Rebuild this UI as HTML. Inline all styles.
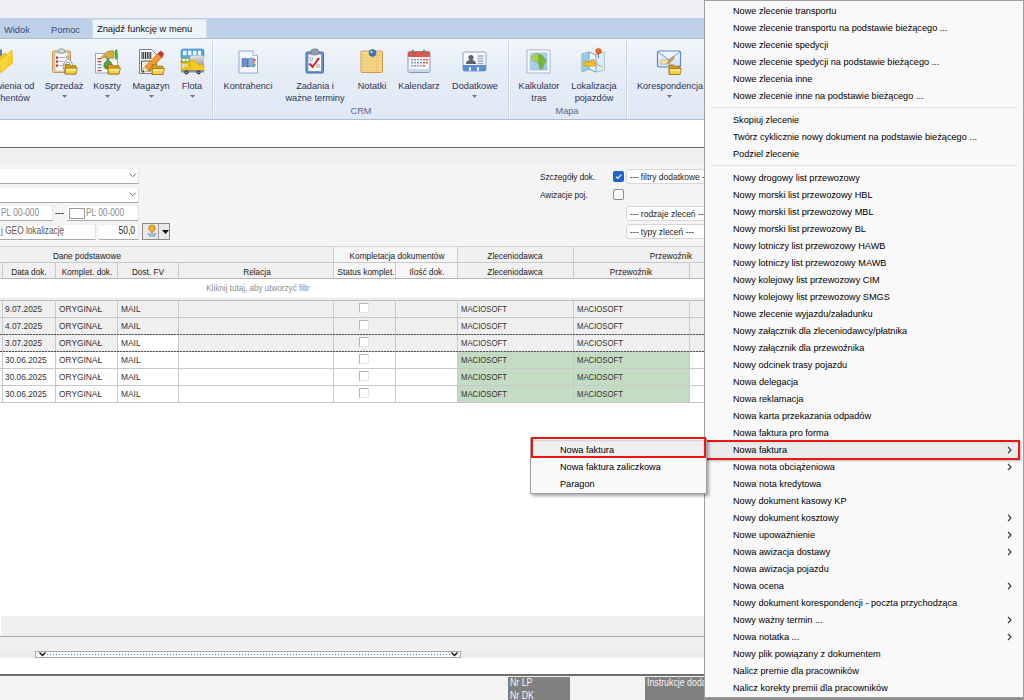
<!DOCTYPE html><html><head><meta charset="utf-8"><style>
html,body{margin:0;padding:0;}
body{width:1024px;height:700px;overflow:hidden;position:relative;background:#f3f3f3;font-family:"Liberation Sans",sans-serif;}
.t{position:absolute;white-space:nowrap;}
.b{position:absolute;box-sizing:border-box;}
svg{position:absolute;}
</style></head><body>
<div class="b" style="left:0px;top:0px;width:1024px;height:18px;background:#eff0f5"></div>
<div class="b" style="left:0px;top:18px;width:1024px;height:21px;background:#bfd1e8"></div>
<div class="b" style="left:92px;top:19px;width:115px;height:19px;background:#edf3fb;border:1px solid #d0dded;border-bottom:none"></div>
<div class="b" style="left:0px;top:38px;width:1024px;height:1px;background:#a9bdd8"></div>
<div class="t" style="left:4px;top:22.0px;font-size:9.6px;line-height:16px;color:#3a4a72;transform:scaleX(0.97);transform-origin:0 50%;">Widok</div>
<div class="t" style="left:51px;top:22.0px;font-size:9.6px;line-height:16px;color:#3a4a72;transform:scaleX(0.97);transform-origin:0 50%;">Pomoc</div>
<div class="t" style="left:97px;top:20.5px;font-size:9.6px;line-height:16px;color:#111;transform:scaleX(0.97);transform-origin:0 50%;">Znajdź funkcję w menu</div>
<div class="b" style="left:0px;top:39px;width:1024px;height:81px;background:linear-gradient(#f3f6fb 0%,#e6edf7 40%,#dfe8f4 100%);border-bottom:1px solid #a8bdd8"></div>
<div class="b" style="left:212px;top:41px;width:1px;height:77px;background:#c6d4e6;box-shadow:1px 0 0 #f6f9fd"></div>
<div class="b" style="left:508px;top:41px;width:1px;height:77px;background:#c6d4e6;box-shadow:1px 0 0 #f6f9fd"></div>
<div class="b" style="left:626px;top:41px;width:1px;height:77px;background:#c6d4e6;box-shadow:1px 0 0 #f6f9fd"></div>
<div class="t" style="left:-135px;width:300px;text-align:center;top:78.0px;font-size:9.6px;line-height:16px;color:#2e3456;transform:scaleX(0.955);transform-origin:50% 50%;">wienia od</div>
<div class="t" style="left:-135px;width:300px;text-align:center;top:89.5px;font-size:9.6px;line-height:16px;color:#2e3456;transform:scaleX(0.955);transform-origin:50% 50%;">hentów</div>
<div class="t" style="left:-86px;width:300px;text-align:center;top:78.0px;font-size:9.6px;line-height:16px;color:#2e3456;transform:scaleX(0.955);transform-origin:50% 50%;">Sprzedaż</div>
<svg style="left:61.5px;top:94.5px" width="5" height="3" viewBox="0 0 5 3"><path d="M0 0H5L2.5 3Z" fill="#707482"/></svg>
<div class="t" style="left:-43px;width:300px;text-align:center;top:78.0px;font-size:9.6px;line-height:16px;color:#2e3456;transform:scaleX(0.955);transform-origin:50% 50%;">Koszty</div>
<svg style="left:104.5px;top:94.5px" width="5" height="3" viewBox="0 0 5 3"><path d="M0 0H5L2.5 3Z" fill="#707482"/></svg>
<div class="t" style="left:1px;width:300px;text-align:center;top:78.0px;font-size:9.6px;line-height:16px;color:#2e3456;transform:scaleX(0.955);transform-origin:50% 50%;">Magazyn</div>
<svg style="left:148.5px;top:94.5px" width="5" height="3" viewBox="0 0 5 3"><path d="M0 0H5L2.5 3Z" fill="#707482"/></svg>
<div class="t" style="left:42px;width:300px;text-align:center;top:78.0px;font-size:9.6px;line-height:16px;color:#2e3456;transform:scaleX(0.955);transform-origin:50% 50%;">Flota</div>
<svg style="left:189.5px;top:94.5px" width="5" height="3" viewBox="0 0 5 3"><path d="M0 0H5L2.5 3Z" fill="#707482"/></svg>
<div class="t" style="left:98px;width:300px;text-align:center;top:78.0px;font-size:9.6px;line-height:16px;color:#2e3456;transform:scaleX(0.955);transform-origin:50% 50%;">Kontrahenci</div>
<div class="t" style="left:165px;width:300px;text-align:center;top:78.0px;font-size:9.6px;line-height:16px;color:#2e3456;transform:scaleX(0.955);transform-origin:50% 50%;">Zadania i</div>
<div class="t" style="left:165px;width:300px;text-align:center;top:89.5px;font-size:9.6px;line-height:16px;color:#2e3456;transform:scaleX(0.955);transform-origin:50% 50%;">ważne terminy</div>
<div class="t" style="left:222px;width:300px;text-align:center;top:78.0px;font-size:9.6px;line-height:16px;color:#2e3456;transform:scaleX(0.955);transform-origin:50% 50%;">Notatki</div>
<div class="t" style="left:269px;width:300px;text-align:center;top:78.0px;font-size:9.6px;line-height:16px;color:#2e3456;transform:scaleX(0.955);transform-origin:50% 50%;">Kalendarz</div>
<div class="t" style="left:324.5px;width:300px;text-align:center;top:78.0px;font-size:9.6px;line-height:16px;color:#2e3456;transform:scaleX(0.955);transform-origin:50% 50%;">Dodatkowe</div>
<svg style="left:472.0px;top:94.5px" width="5" height="3" viewBox="0 0 5 3"><path d="M0 0H5L2.5 3Z" fill="#707482"/></svg>
<div class="t" style="left:389px;width:300px;text-align:center;top:78.0px;font-size:9.6px;line-height:16px;color:#2e3456;transform:scaleX(0.955);transform-origin:50% 50%;">Kalkulator</div>
<div class="t" style="left:389px;width:300px;text-align:center;top:89.5px;font-size:9.6px;line-height:16px;color:#2e3456;transform:scaleX(0.955);transform-origin:50% 50%;">tras</div>
<div class="t" style="left:444px;width:300px;text-align:center;top:78.0px;font-size:9.6px;line-height:16px;color:#2e3456;transform:scaleX(0.955);transform-origin:50% 50%;">Lokalizacja</div>
<div class="t" style="left:444px;width:300px;text-align:center;top:89.5px;font-size:9.6px;line-height:16px;color:#2e3456;transform:scaleX(0.955);transform-origin:50% 50%;">pojazdów</div>
<div class="t" style="left:519.5px;width:300px;text-align:center;top:78.0px;font-size:9.6px;line-height:16px;color:#2e3456;transform:scaleX(0.955);transform-origin:50% 50%;">Korespondencja</div>
<svg style="left:667.0px;top:94.5px" width="5" height="3" viewBox="0 0 5 3"><path d="M0 0H5L2.5 3Z" fill="#707482"/></svg>
<div class="t" style="left:210.5px;width:300px;text-align:center;top:103.0px;font-size:9.6px;line-height:16px;color:#5a6688;transform:scaleX(0.955);transform-origin:50% 50%;">CRM</div>
<div class="t" style="left:417px;width:300px;text-align:center;top:103.0px;font-size:9.6px;line-height:16px;color:#5a6688;transform:scaleX(0.955);transform-origin:50% 50%;">Mapa</div>
<svg style="left:0px;top:45px" width="16" height="30" viewBox="0 0 16 30"><defs><linearGradient id="fg1" x1="0" y1="0" x2="1" y2="1"><stop offset="0" stop-color="#fde56a"/><stop offset="1" stop-color="#f4c400"/></linearGradient></defs><rect x="-1" y="4.5" width="3" height="12" fill="#6b7a92"/><path d="M0 12L3 8.5L5 7.5L7 9.5L12 5L12.5 15L0 19Z" fill="#f0c428"/><path d="M0 16L12 5L12.5 18L1.5 27.5L0 27Z" fill="url(#fg1)" stroke="#d8a800" stroke-width=".5"/></svg>
<svg style="left:51px;top:48px" width="28" height="28" viewBox="0 0 28 28"><rect x="1.5" y="3" width="18" height="21.5" rx="1" fill="#ecc888" stroke="#c99a48" stroke-width="1"/><rect x="4" y="5" width="13" height="18" fill="#f8f8fb" stroke="#a8b4c8" stroke-width=".6"/><rect x="7.5" y="1" width="6" height="4" rx="1.5" fill="#d4d8e0" stroke="#7a808c" stroke-width=".7"/><path d="M8.5 9.5h6M8.5 13.5h3M8.5 17.5h3" stroke="#9aa8c8" stroke-width="1"/><rect x="5" y="8.5" width="2.2" height="2.2" fill="#d02030"/><rect x="5" y="12.5" width="2.2" height="2.2" fill="#d02030"/><rect x="5" y="16.5" width="2.2" height="2.2" fill="#d02030"/><path d="M15.5 8c2 0 3 1 2 3c3 2 5 6 4 10c-1 2.5-8 2.5-9 0c-1-4 1-8 4-10c-1-1.5-1-3-1-3z" fill="#f6f6f6" stroke="#7a7a7a" stroke-width=".8"/><circle cx="17" cy="16" r="2" fill="none" stroke="#909090" stroke-width=".8"/><path d="M14 16.5h4.5l1 1.2h5.5v8.3h-11z" fill="#d8a018" stroke="#8c6010" stroke-width=".7"/><path d="M14.3 20h12.2l-1.6 6h-10.6z" fill="#f6d040" stroke="#9a6c10" stroke-width=".7"/><path d="M15.2 21h10.3l-.4 1.6h-9.9z" fill="#fdf0a0"/></svg>
<svg style="left:94px;top:48px" width="28" height="28" viewBox="0 0 28 28"><rect x="1.5" y="5.5" width="22" height="19.5" fill="#fafafa" stroke="#98a8c0" stroke-width="1"/><path d="M9 9h12M9 12h12M9 15h6M9 18h6" stroke="#c8d0e0" stroke-width=".8"/><rect x="3.5" y="10" width="4" height="1.3" fill="#e03040"/><rect x="3.5" y="13" width="4" height="1.3" fill="#e03040"/><rect x="3.5" y="16" width="4" height="1.3" fill="#8090b0"/><rect x="3.5" y="19" width="4" height="1.3" fill="#8090b0"/><rect x="3.5" y="22" width="4" height="1.3" fill="#e03040"/><path d="M7 9.5L12 4.5c2-1.5 5-2 8-1.5v7c-2 .5-4 0-5-.5l-3 .5l-1-1l2-1l-3 2z" fill="#d8b040" stroke="#a07818" stroke-width=".6"/><rect x="21" y="1.5" width="2.5" height="10" rx="1" fill="#3cb040"/><path d="M12.5 10.5h3l-1 2c3 1 4 4 3.5 7c-1 2-7 2-8 0c-.5-3 .5-6 3.5-7z" fill="#58a048" stroke="#3a7830" stroke-width=".6"/><path d="M14 16.5h4.5l1 1.2h5.5v8.3h-11z" fill="#d8a018" stroke="#8c6010" stroke-width=".7"/><path d="M14.3 20h12.2l-1.6 6h-10.6z" fill="#f6d040" stroke="#9a6c10" stroke-width=".7"/><path d="M15.2 21h10.3l-.4 1.6h-9.9z" fill="#fdf0a0"/></svg>
<svg style="left:138px;top:48px" width="28" height="28" viewBox="0 0 28 28"><path d="M1.5 1.5h12l5 5v19h-17z" fill="#fbfbfb" stroke="#7080a8" stroke-width="1"/><path d="M4 4v7M5.7 4v7M7.5 4v7M9.3 4v7M11 4v7M12.8 4v7" stroke="#222" stroke-width="1"/><rect x="3.5" y="13" width="9" height="10" fill="#e8e8e8" stroke="#333" stroke-width=".8"/><path d="M4 24.5L6.5 19L20 5.5L24 9.5L10.5 23Z" fill="#f29a28" stroke="#a85a10" stroke-width=".6"/><path d="M20 5.5L22 3.5c1-1 3.5 1.5 3.5 2.5L24 9.5z" fill="#d83030" stroke="#a01818" stroke-width=".5"/><path d="M4 24.5l2.5-5.5l4 4z" fill="#f4e0c0"/><path d="M4 24.5l1-2.2l1.6 1.6z" fill="#222"/><path d="M14 17.0h4.5l1 1.2h5.5v8.3h-11z" fill="#d8a018" stroke="#8c6010" stroke-width=".7"/><path d="M14.3 20.5h12.2l-1.6 6h-10.6z" fill="#f6d040" stroke="#9a6c10" stroke-width=".7"/><path d="M15.2 21.5h10.3l-.4 1.6h-9.9z" fill="#fdf0a0"/></svg>
<svg style="left:180px;top:48px" width="26" height="27" viewBox="0 0 26 27"><defs><linearGradient id="gcont" x1="0" y1="0" x2="0" y2="1"><stop offset="0" stop-color="#e4e4e4"/><stop offset="1" stop-color="#a4a4a4"/></linearGradient></defs><path d="M1 10V3a2 2 0 0 1 2-2h19a2 2 0 0 1 2 2v7z" fill="#5aa6e6" stroke="#3a86c8" stroke-width=".6"/><rect x="3" y="2.8" width="3.4" height="4.4" fill="#eef6ff"/><rect x="8" y="2.8" width="3.4" height="4.4" fill="#eef6ff"/><rect x="13" y="2.8" width="3.4" height="4.4" fill="#eef6ff"/><rect x="18" y="2.8" width="3" height="4.4" fill="#eef6ff"/><rect x="1" y="9.5" width="9.5" height="6" fill="#78bc5c"/><rect x="2.5" y="11" width="2.5" height="2" fill="#fff"/><rect x="6" y="11" width="2.5" height="2" fill="#fff"/><path d="M10 17V9.5a2 2 0 0 1 2-2h10a2 2 0 0 1 2 2V17z" fill="url(#gcont)"/><path d="M10 12.5h5l4 4.5h5v5.5h-14z" fill="#f6c81c" stroke="#d09810" stroke-width=".5"/><path d="M1 14.5h9v8h-9z" fill="#f4c018" stroke="#d09810" stroke-width=".5"/><rect x="2.2" y="16" width="2.3" height="3.5" fill="#c8e8fa"/><rect x="5.3" y="16" width="2.3" height="2.5" fill="#c8e8fa"/><rect x="1" y="22" width="23" height="2.5" fill="#8e8e96"/><circle cx="6.5" cy="24.3" r="2.1" fill="#3a3a3a"/><circle cx="6.5" cy="24.3" r=".8" fill="#ccc"/><circle cx="18.5" cy="24.3" r="2.1" fill="#3a3a3a"/><circle cx="18.5" cy="24.3" r=".8" fill="#ccc"/><rect x="0.5" y="13" width="1" height="1.5" fill="#e03030"/></svg>
<svg style="left:238px;top:50px" width="21" height="24" viewBox="0 0 21 24"><path d="M1 1h14l4.5 4.5v17.5h-18.5z" fill="#f4f8fd" stroke="#8aaad0" stroke-width="1"/><path d="M15 1v4.5h4.5" fill="#ffffff" stroke="#8aaad0" stroke-width=".8"/><path d="M4 9c2-1 4-1 6 0v8c-2-1-4-1-6 0z" fill="#6f93c8" stroke="#3c5c90" stroke-width=".6"/><path d="M10 9c2-1 4-1 6 0v8c-2-1-4-1-6 0z" fill="#8fb0dc" stroke="#3c5c90" stroke-width=".6"/><rect x="16" y="9" width="1.5" height="2" fill="#e04040"/><rect x="16" y="11.5" width="1.5" height="2" fill="#f0c030"/><rect x="16" y="14" width="1.5" height="2" fill="#40b060"/></svg>
<svg style="left:305px;top:48px" width="20" height="26" viewBox="0 0 20 26"><rect x="1" y="4" width="17.5" height="21" rx="1.5" fill="#6a98d0" stroke="#3a68a8" stroke-width="1"/><rect x="3.5" y="6.5" width="12.5" height="16.5" fill="#fbfbfb"/><rect x="6" y="1" width="7.5" height="6" rx="2" fill="#9a9ea8" stroke="#6a6e78" stroke-width=".6"/><rect x="5" y="10" width="2.5" height="2.5" fill="none" stroke="#888" stroke-width=".6"/><path d="M11 11h4M11 17h4M11 19h4" stroke="#888" stroke-width=".8"/><path d="M4.5 15.5L7.5 19L14 10" stroke="#d82028" stroke-width="2" fill="none"/></svg>
<svg style="left:360px;top:49px" width="24" height="25" viewBox="0 0 24 25"><rect x="1" y="2" width="21.5" height="21.5" rx="1" fill="#f7d88a" stroke="#d09a50" stroke-width="1"/><path d="M2 6h20M2 9h20M2 12h20M2 15h20M2 18h20M2 21h20" stroke="#e8b860" stroke-width=".6"/><path d="M17 2v21" stroke="#e0a850" stroke-width=".5"/><circle cx="12.5" cy="4" r="3.4" fill="#3a78c0" stroke="#205090" stroke-width=".6"/><circle cx="11.5" cy="3" r="1.2" fill="#a8d0f0"/></svg>
<svg style="left:407px;top:49px" width="24" height="25" viewBox="0 0 24 25"><rect x="1" y="2.5" width="22" height="21" rx="1.5" fill="#f7f7fa" stroke="#8a98b8" stroke-width="1"/><rect x="1" y="2.5" width="22" height="5.5" rx="1.5" fill="#e05548"/><rect x="5" y="0.5" width="2" height="5" rx="1" fill="#777"/><rect x="16" y="0.5" width="2" height="5" rx="1" fill="#777"/><g fill="#8a98c0"><rect x="4" y="10" width="2" height="1.5"/><rect x="7" y="10" width="2" height="1.5"/><rect x="10" y="10" width="2" height="1.5"/><rect x="13" y="10" width="2" height="1.5"/><rect x="4" y="13" width="2" height="1.5"/><rect x="7" y="13" width="2" height="1.5"/><rect x="10" y="13" width="2" height="1.5"/><rect x="13" y="13" width="2" height="1.5"/><rect x="4" y="16" width="2" height="1.5"/><rect x="7" y="16" width="2" height="1.5"/><rect x="10" y="16" width="2" height="1.5"/><rect x="13" y="16" width="2" height="1.5"/></g><g fill="#e05548"><rect x="16" y="10" width="2" height="1.5"/><rect x="19" y="10" width="2" height="1.5"/><rect x="16" y="13" width="2" height="1.5"/><rect x="19" y="13" width="2" height="1.5"/><rect x="16" y="16" width="2" height="1.5"/></g><rect x="1.5" y="20" width="21" height="3" fill="#c8d4e8"/></svg>
<svg style="left:462px;top:51px" width="25" height="22" viewBox="0 0 25 22"><rect x="1" y="1" width="23" height="19" rx="1.5" fill="#fafbfd" stroke="#8aa0c8" stroke-width="1"/><path d="M1 14h23v4.5a1.5 1.5 0 0 1-1.5 1.5h-20a1.5 1.5 0 0 1-1.5-1.5z" fill="#5a90d0"/><circle cx="9" cy="6.5" r="2.6" fill="#5a6470"/><path d="M4 13c0-3 2-4 5-4s5 1 5 4z" fill="#5a6470"/><path d="M15.5 5h6M15.5 7.5h6M15.5 10h6M15.5 12.5h6" stroke="#a0acc8" stroke-width="1.4"/><rect x="7" y="16" width="2" height="4" rx="1" fill="#f0f4fa"/><rect x="15" y="16" width="2" height="4" rx="1" fill="#f0f4fa"/></svg>
<svg style="left:526px;top:49px" width="25" height="25" viewBox="0 0 25 25"><defs><linearGradient id="afr" x1="0" y1="0" x2="1" y2="0"><stop offset="0" stop-color="#b0d868"/><stop offset=".45" stop-color="#a0cc58"/><stop offset=".5" stop-color="#78b030"/><stop offset="1" stop-color="#80b838"/></linearGradient><linearGradient id="sea" x1="0" y1="0" x2="1" y2="1"><stop offset="0" stop-color="#b8dcf2"/><stop offset="1" stop-color="#8ec4e8"/></linearGradient></defs><rect x="1" y="1" width="23" height="23" fill="#fdfdff" stroke="#98a0c8" stroke-width=".8"/><rect x="3.5" y="3.5" width="18" height="18" fill="url(#sea)"/><path d="M9 4.5C11 4 12 5 14 5.5C16 5.5 17 7 18 9C19 10 20.5 10.5 20 12C19 14 18 15 17.5 17C17 19 15.5 20.5 14.5 20.5C13.5 19 13 16 12.5 14C11 13 9.5 12.5 7.5 12.5C5.5 12 5 10 5.5 8.5C6 6.5 7.5 5 9 4.5Z" fill="url(#afr)" stroke="#5a9020" stroke-width=".4"/></svg>
<svg style="left:580px;top:47px" width="27" height="27" viewBox="0 0 27 27"><path d="M2 7L9 5L16 8L24 5V23L16 25L9 22L2 25Z" fill="#eaf4fa" stroke="#6a90a8" stroke-width=".9"/><path d="M2 7L9 5V22L2 25Z" fill="#9ccbe6"/><path d="M16 8L24 5V23L16 25Z" fill="#d8ecf6"/><path d="M9 5V22M16 8V25" stroke="#6a90a8" stroke-width=".8"/><path d="M3 12l6 3l4-3l5 6l5 2" stroke="#e08868" stroke-width=".7" fill="none"/><path d="M4 15h7v-2h2l2 2v4h-11z" fill="#f2c21e" stroke="#a88010" stroke-width=".5"/><circle cx="18.5" cy="4.2" r="2.8" fill="#e86a28" stroke="#b04a10" stroke-width=".5"/><path d="M18.5 7v4" stroke="#777" stroke-width=".9"/></svg>
<svg style="left:656px;top:49px" width="28" height="27" viewBox="0 0 28 27"><defs><linearGradient id="envg" x1="0" y1="0" x2="0" y2="1"><stop offset="0" stop-color="#f4f8fe"/><stop offset="1" stop-color="#cfe0f4"/></linearGradient></defs><rect x="1.5" y="2" width="23" height="16" rx="1.5" fill="url(#envg)" stroke="#5a8ad0" stroke-width="1.2"/><path d="M1.5 2.5L13 11L24.5 2.5" stroke="#6a96d4" stroke-width="1" fill="none"/><rect x="5" y="11" width="8" height="4" fill="#f4e6a8" stroke="#b09040" stroke-width=".5"/><path d="M11 13.5L17 7.5L18.5 9L12.5 15Z" fill="#e8a040" stroke="#706050" stroke-width=".5"/><path d="M13 16.0h4.5l1 1.2h5.5v8.3h-11z" fill="#d8a018" stroke="#8c6010" stroke-width=".7"/><path d="M13.3 19.5h12.2l-1.6 6h-10.6z" fill="#f6d040" stroke="#9a6c10" stroke-width=".7"/><path d="M14.2 20.5h10.3l-.4 1.6h-9.9z" fill="#fdf0a0"/></svg>
<div class="b" style="left:0px;top:120px;width:1024px;height:27px;background:#ffffff"></div>
<div class="b" style="left:0px;top:147px;width:1024px;height:1px;background:#6b6b6b"></div>
<div class="b" style="left:0px;top:148px;width:1024px;height:17px;background:#efefef"></div>
<div class="b" style="left:0px;top:165px;width:1024px;height:81px;background:#f4f4f4"></div>
<div class="b" style="left:-2px;top:168px;width:141px;height:16px;background:#fff;border-bottom:1px solid #a9a9a9;border-right:1px solid #e3e3e3;border-top:1px solid #f0f0f0"></div>
<svg style="left:129px;top:173px" width="8" height="5" viewBox="0 0 8 5"><path d="M0.5 0.5L3.75 3.75L7 0.5" stroke="#777" fill="none" stroke-width="1"/></svg>
<div class="b" style="left:-2px;top:187px;width:141px;height:16px;background:#fff;border-bottom:1px solid #a9a9a9;border-right:1px solid #e3e3e3;border-top:1px solid #f0f0f0"></div>
<svg style="left:129px;top:192px" width="8" height="5" viewBox="0 0 8 5"><path d="M0.5 0.5L3.75 3.75L7 0.5" stroke="#777" fill="none" stroke-width="1"/></svg>
<div class="b" style="left:-2px;top:205px;width:55px;height:16px;background:#fff;border-bottom:1px solid #a9a9a9;border-right:1px solid #e3e3e3;border-top:1px solid #f0f0f0"></div>
<div class="t" style="left:1px;top:204.5px;font-size:10px;line-height:16px;color:#8a8a8a;transform:scaleX(0.83);transform-origin:0 50%;">PL 00-000</div>
<div class="t" style="left:55px;top:205.0px;font-size:10px;line-height:16px;color:#222;transform:scaleX(0.9);transform-origin:0 50%;">---</div>
<div class="b" style="left:67px;top:205px;width:72px;height:16px;background:#fff;border-bottom:1px solid #a9a9a9;border-right:1px solid #e3e3e3;border-top:1px solid #f0f0f0"></div>
<div class="b" style="left:69px;top:208px;width:16px;height:11px;background:#fff;border:1px solid #9a9a9a"></div>
<div class="t" style="left:86px;top:204.5px;font-size:10px;line-height:16px;color:#8a8a8a;transform:scaleX(0.83);transform-origin:0 50%;">PL 00-000</div>
<div class="b" style="left:-2px;top:224px;width:98px;height:16px;background:#fff;border-bottom:1px solid #a9a9a9;border-right:1px solid #e3e3e3;border-top:1px solid #f0f0f0"></div>
<div class="t" style="left:1px;top:223.0px;font-size:10px;line-height:16px;color:#555;transform:scaleX(0.83);transform-origin:0 50%;">j GEO lokalizację</div>
<div class="b" style="left:99px;top:224px;width:40px;height:16px;background:#fff;border-bottom:1px solid #a9a9a9;border-right:1px solid #e3e3e3;border-top:1px solid #f0f0f0"></div>
<div class="t" style="left:-165px;width:300px;text-align:right;top:223.0px;font-size:10px;line-height:16px;color:#222;transform:scaleX(0.85);transform-origin:100% 50%;">50,0</div>
<div class="b" style="left:142px;top:223px;width:28px;height:17px;background:#e9e9e9;border:1px solid #8a8a8a"></div>
<div class="b" style="left:158px;top:224px;width:1px;height:15px;background:#a0a0a0"></div>
<svg style="left:147px;top:224px" width="10" height="14" viewBox="0 0 10 14"><path d="M5 1a3.2 3.2 0 0 1 3.2 3.2C8.2 6.5 5 9 5 9S1.8 6.5 1.8 4.2A3.2 3.2 0 0 1 5 1z" fill="#f0b030" stroke="#b07810" stroke-width=".8"/><path d="M1 9L3 13L5 11L7 13L9 9" fill="#a8c0e0" stroke="#6080b0" stroke-width=".6"/></svg>
<svg style="left:161.5px;top:230px" width="7" height="4" viewBox="0 0 7 4"><path d="M0 0H7L3.5 4Z" fill="#111"/></svg>
<div class="t" style="left:539.5px;top:168.5px;font-size:9.6px;line-height:16px;color:#222;transform:scaleX(0.855);transform-origin:0 50%;">Szczegóły dok.</div>
<div class="b" style="left:613px;top:171px;width:11px;height:11px;background:#1e63cc;border-radius:2px"></div>
<svg style="left:614px;top:172px" width="9" height="9" viewBox="0 0 9 9"><path d="M2 4.6L3.8 6.4L7.2 2.6" stroke="#fff" stroke-width="1.1" fill="none"/></svg>
<div class="b" style="left:626px;top:169px;width:90px;height:15px;background:#fff;border:1px solid #d6d6d6;border-radius:3px"></div>
<div class="t" style="left:630px;top:168.5px;font-size:9.6px;line-height:16px;color:#1a1a1a;transform:scaleX(0.885);transform-origin:0 50%;">--- filtry dodatkowe ---</div>
<div class="t" style="left:539.5px;top:187.0px;font-size:9.6px;line-height:16px;color:#222;transform:scaleX(0.855);transform-origin:0 50%;">Awizacje poj.</div>
<div class="b" style="left:613px;top:189px;width:11px;height:11px;background:#fbfbfb;border:1px solid #8a8a8a;border-radius:2px"></div>
<div class="b" style="left:626px;top:206px;width:90px;height:15px;background:#fff;border:1px solid #d6d6d6;border-radius:3px"></div>
<div class="t" style="left:630px;top:205.5px;font-size:9.6px;line-height:16px;color:#1a1a1a;transform:scaleX(0.885);transform-origin:0 50%;">--- rodzaje zleceń ---</div>
<div class="b" style="left:626px;top:224px;width:90px;height:15px;background:#fff;border:1px solid #d6d6d6;border-radius:3px"></div>
<div class="t" style="left:630px;top:223.5px;font-size:9.6px;line-height:16px;color:#1a1a1a;transform:scaleX(0.885);transform-origin:0 50%;">--- typy zleceń ---</div>
<div class="b" style="left:0px;top:246px;width:1024px;height:33px;background:#f0f0f0;border-top:1px solid #d6d6d6"></div>
<div class="b" style="left:333px;top:247px;width:124px;height:32px;background:#f6f6f6"></div>
<div class="b" style="left:0px;top:262px;width:1024px;height:1px;background:#c9c9c9"></div>
<div class="b" style="left:0px;top:278px;width:1024px;height:1px;background:#b5b5b5"></div>
<div class="b" style="left:333px;top:247px;width:1px;height:31px;background:#c9c9c9"></div>
<div class="b" style="left:457px;top:247px;width:1px;height:31px;background:#c9c9c9"></div>
<div class="b" style="left:573px;top:247px;width:1px;height:31px;background:#c9c9c9"></div>
<div class="b" style="left:2px;top:263px;width:1px;height:15px;background:#c9c9c9"></div>
<div class="b" style="left:55px;top:263px;width:1px;height:15px;background:#c9c9c9"></div>
<div class="b" style="left:117px;top:263px;width:1px;height:15px;background:#c9c9c9"></div>
<div class="b" style="left:178px;top:263px;width:1px;height:15px;background:#c9c9c9"></div>
<div class="b" style="left:395px;top:263px;width:1px;height:15px;background:#c9c9c9"></div>
<div class="b" style="left:689px;top:263px;width:1px;height:15px;background:#c9c9c9"></div>
<div class="t" style="left:-63px;width:300px;text-align:center;top:248.0px;font-size:9px;line-height:16px;color:#222;transform:scaleX(0.92);transform-origin:50% 50%;">Dane podstawowe</div>
<div class="t" style="left:246.5px;width:300px;text-align:center;top:248.0px;font-size:9px;line-height:16px;color:#222;transform:scaleX(0.92);transform-origin:50% 50%;">Kompletacja dokumentów</div>
<div class="t" style="left:365px;width:300px;text-align:center;top:248.0px;font-size:9px;line-height:16px;color:#222;transform:scaleX(0.92);transform-origin:50% 50%;">Zleceniodawca</div>
<div class="t" style="left:521px;width:300px;text-align:center;top:248.0px;font-size:9px;line-height:16px;color:#222;transform:scaleX(0.92);transform-origin:50% 50%;">Przewoźnik</div>
<div class="t" style="left:-121px;width:300px;text-align:center;top:264.0px;font-size:9px;line-height:16px;color:#222;transform:scaleX(0.92);transform-origin:50% 50%;">Data dok.</div>
<div class="t" style="left:-63px;width:300px;text-align:center;top:264.0px;font-size:9px;line-height:16px;color:#222;transform:scaleX(0.92);transform-origin:50% 50%;">Komplet. dok.</div>
<div class="t" style="left:-2px;width:300px;text-align:center;top:264.0px;font-size:9px;line-height:16px;color:#222;transform:scaleX(0.92);transform-origin:50% 50%;">Dost. FV</div>
<div class="t" style="left:107px;width:300px;text-align:center;top:264.0px;font-size:9px;line-height:16px;color:#222;transform:scaleX(0.92);transform-origin:50% 50%;">Relacja</div>
<div class="t" style="left:216px;width:300px;text-align:center;top:264.0px;font-size:9px;line-height:16px;color:#222;transform:scaleX(0.92);transform-origin:50% 50%;">Status komplet.</div>
<div class="t" style="left:277px;width:300px;text-align:center;top:264.0px;font-size:9px;line-height:16px;color:#222;transform:scaleX(0.92);transform-origin:50% 50%;">Ilość dok.</div>
<div class="t" style="left:365px;width:300px;text-align:center;top:264.0px;font-size:9px;line-height:16px;color:#222;transform:scaleX(0.92);transform-origin:50% 50%;">Zleceniodawca</div>
<div class="t" style="left:481px;width:300px;text-align:center;top:264.0px;font-size:9px;line-height:16px;color:#222;transform:scaleX(0.92);transform-origin:50% 50%;">Przewoźnik</div>
<div class="b" style="left:0px;top:279px;width:1024px;height:18px;background:#fff"></div>
<div class="b" style="left:0px;top:297px;width:1024px;height:3px;background:linear-gradient(#fafafa,#e6e6e6)"></div>
<div class="t" style="left:108px;width:300px;text-align:center;top:279.5px;font-size:9px;line-height:16px;color:#8c8c8c;transform:scaleX(0.9);transform-origin:50% 50%;">Kliknij tutaj, aby utworzyć filtr</div>
<div class="b" style="left:0px;top:300px;width:1024px;height:1px;background:#bdbdbd"></div>
<div class="b" style="left:0px;top:301px;width:1024px;height:16px;background:#efefef"></div>
<div class="b" style="left:0px;top:317px;width:1024px;height:1px;background:#c8c8c8"></div>
<div class="t" style="left:5px;top:300.8px;font-size:9px;line-height:16px;color:#333;transform:scaleX(0.925);transform-origin:0 50%;">9.07.2025</div>
<div class="t" style="left:58.5px;top:300.8px;font-size:9px;line-height:16px;color:#333;transform:scaleX(0.93);transform-origin:0 50%;">ORYGINAŁ</div>
<div class="t" style="left:120.5px;top:300.8px;font-size:9px;line-height:16px;color:#333;transform:scaleX(0.93);transform-origin:0 50%;">MAIL</div>
<div class="t" style="left:461px;top:300.8px;font-size:9px;line-height:16px;color:#333;transform:scaleX(0.86);transform-origin:0 50%;">MACIOSOFT</div>
<div class="t" style="left:577px;top:300.8px;font-size:9px;line-height:16px;color:#333;transform:scaleX(0.86);transform-origin:0 50%;">MACIOSOFT</div>
<div class="b" style="left:359px;top:303px;width:10px;height:10px;background:#fff;border:1px solid #e6e6e6;border-top-color:#b4b4b4;border-left-color:#b4b4b4"></div>
<div class="b" style="left:0px;top:318px;width:1024px;height:16px;background:#efefef"></div>
<div class="b" style="left:0px;top:334px;width:1024px;height:1px;background:#c8c8c8"></div>
<div class="t" style="left:5px;top:317.8px;font-size:9px;line-height:16px;color:#333;transform:scaleX(0.925);transform-origin:0 50%;">4.07.2025</div>
<div class="t" style="left:58.5px;top:317.8px;font-size:9px;line-height:16px;color:#333;transform:scaleX(0.93);transform-origin:0 50%;">ORYGINAŁ</div>
<div class="t" style="left:120.5px;top:317.8px;font-size:9px;line-height:16px;color:#333;transform:scaleX(0.93);transform-origin:0 50%;">MAIL</div>
<div class="t" style="left:461px;top:317.8px;font-size:9px;line-height:16px;color:#333;transform:scaleX(0.86);transform-origin:0 50%;">MACIOSOFT</div>
<div class="t" style="left:577px;top:317.8px;font-size:9px;line-height:16px;color:#333;transform:scaleX(0.86);transform-origin:0 50%;">MACIOSOFT</div>
<div class="b" style="left:359px;top:320px;width:10px;height:10px;background:#fff;border:1px solid #e6e6e6;border-top-color:#b4b4b4;border-left-color:#b4b4b4"></div>
<div class="b" style="left:0px;top:335px;width:1024px;height:16px;background:#efefef"></div>
<div class="b" style="left:0px;top:351px;width:1024px;height:1px;background:#c8c8c8"></div>
<div class="b" style="left:118px;top:335px;width:60px;height:16px;background:#fff"></div>
<div class="t" style="left:5px;top:334.8px;font-size:9px;line-height:16px;color:#333;transform:scaleX(0.925);transform-origin:0 50%;">3.07.2025</div>
<div class="t" style="left:58.5px;top:334.8px;font-size:9px;line-height:16px;color:#333;transform:scaleX(0.93);transform-origin:0 50%;">ORYGINAŁ</div>
<div class="t" style="left:120.5px;top:334.8px;font-size:9px;line-height:16px;color:#333;transform:scaleX(0.93);transform-origin:0 50%;">MAIL</div>
<div class="t" style="left:461px;top:334.8px;font-size:9px;line-height:16px;color:#333;transform:scaleX(0.86);transform-origin:0 50%;">MACIOSOFT</div>
<div class="t" style="left:577px;top:334.8px;font-size:9px;line-height:16px;color:#333;transform:scaleX(0.86);transform-origin:0 50%;">MACIOSOFT</div>
<div class="b" style="left:359px;top:337px;width:10px;height:10px;background:#fff;border:1px solid #e6e6e6;border-top-color:#b4b4b4;border-left-color:#b4b4b4"></div>
<div class="b" style="left:0px;top:352px;width:1024px;height:16px;background:#ffffff"></div>
<div class="b" style="left:458px;top:352px;width:231px;height:16px;background:#c3dcc3"></div>
<div class="b" style="left:0px;top:368px;width:1024px;height:1px;background:#c8c8c8"></div>
<div class="t" style="left:5px;top:351.8px;font-size:9px;line-height:16px;color:#333;transform:scaleX(0.925);transform-origin:0 50%;">30.06.2025</div>
<div class="t" style="left:58.5px;top:351.8px;font-size:9px;line-height:16px;color:#333;transform:scaleX(0.93);transform-origin:0 50%;">ORYGINAŁ</div>
<div class="t" style="left:120.5px;top:351.8px;font-size:9px;line-height:16px;color:#333;transform:scaleX(0.93);transform-origin:0 50%;">MAIL</div>
<div class="t" style="left:461px;top:351.8px;font-size:9px;line-height:16px;color:#333;transform:scaleX(0.86);transform-origin:0 50%;">MACIOSOFT</div>
<div class="t" style="left:577px;top:351.8px;font-size:9px;line-height:16px;color:#333;transform:scaleX(0.86);transform-origin:0 50%;">MACIOSOFT</div>
<div class="b" style="left:359px;top:354px;width:10px;height:10px;background:#fff;border:1px solid #e6e6e6;border-top-color:#b4b4b4;border-left-color:#b4b4b4"></div>
<div class="b" style="left:0px;top:369px;width:1024px;height:16px;background:#ffffff"></div>
<div class="b" style="left:458px;top:369px;width:231px;height:16px;background:#c3dcc3"></div>
<div class="b" style="left:0px;top:385px;width:1024px;height:1px;background:#c8c8c8"></div>
<div class="t" style="left:5px;top:368.8px;font-size:9px;line-height:16px;color:#333;transform:scaleX(0.925);transform-origin:0 50%;">30.06.2025</div>
<div class="t" style="left:58.5px;top:368.8px;font-size:9px;line-height:16px;color:#333;transform:scaleX(0.93);transform-origin:0 50%;">ORYGINAŁ</div>
<div class="t" style="left:120.5px;top:368.8px;font-size:9px;line-height:16px;color:#333;transform:scaleX(0.93);transform-origin:0 50%;">MAIL</div>
<div class="t" style="left:461px;top:368.8px;font-size:9px;line-height:16px;color:#333;transform:scaleX(0.86);transform-origin:0 50%;">MACIOSOFT</div>
<div class="t" style="left:577px;top:368.8px;font-size:9px;line-height:16px;color:#333;transform:scaleX(0.86);transform-origin:0 50%;">MACIOSOFT</div>
<div class="b" style="left:359px;top:371px;width:10px;height:10px;background:#fff;border:1px solid #e6e6e6;border-top-color:#b4b4b4;border-left-color:#b4b4b4"></div>
<div class="b" style="left:0px;top:386px;width:1024px;height:16px;background:#ffffff"></div>
<div class="b" style="left:458px;top:386px;width:231px;height:16px;background:#c3dcc3"></div>
<div class="b" style="left:0px;top:402px;width:1024px;height:1px;background:#c8c8c8"></div>
<div class="t" style="left:5px;top:385.8px;font-size:9px;line-height:16px;color:#333;transform:scaleX(0.925);transform-origin:0 50%;">30.06.2025</div>
<div class="t" style="left:58.5px;top:385.8px;font-size:9px;line-height:16px;color:#333;transform:scaleX(0.93);transform-origin:0 50%;">ORYGINAŁ</div>
<div class="t" style="left:120.5px;top:385.8px;font-size:9px;line-height:16px;color:#333;transform:scaleX(0.93);transform-origin:0 50%;">MAIL</div>
<div class="t" style="left:461px;top:385.8px;font-size:9px;line-height:16px;color:#333;transform:scaleX(0.86);transform-origin:0 50%;">MACIOSOFT</div>
<div class="t" style="left:577px;top:385.8px;font-size:9px;line-height:16px;color:#333;transform:scaleX(0.86);transform-origin:0 50%;">MACIOSOFT</div>
<div class="b" style="left:359px;top:388px;width:10px;height:10px;background:#fff;border:1px solid #e6e6e6;border-top-color:#b4b4b4;border-left-color:#b4b4b4"></div>
<div class="b" style="left:2px;top:300px;width:1px;height:102px;background:#c9c9c9"></div>
<div class="b" style="left:55px;top:300px;width:1px;height:102px;background:#c9c9c9"></div>
<div class="b" style="left:117px;top:300px;width:1px;height:102px;background:#c9c9c9"></div>
<div class="b" style="left:178px;top:300px;width:1px;height:102px;background:#c9c9c9"></div>
<div class="b" style="left:333px;top:300px;width:1px;height:102px;background:#c9c9c9"></div>
<div class="b" style="left:395px;top:300px;width:1px;height:102px;background:#c9c9c9"></div>
<div class="b" style="left:457px;top:300px;width:1px;height:102px;background:#c9c9c9"></div>
<div class="b" style="left:573px;top:300px;width:1px;height:102px;background:#c9c9c9"></div>
<div class="b" style="left:689px;top:300px;width:1px;height:102px;background:#c9c9c9"></div>
<div class="b" style="left:0px;top:334px;width:704px;height:1px;background:repeating-linear-gradient(90deg,#555 0 2px,#bbb 2px 3px)"></div>
<div class="b" style="left:0px;top:351px;width:704px;height:1px;background:repeating-linear-gradient(90deg,#555 0 2px,#bbb 2px 3px)"></div>
<div class="b" style="left:0px;top:403px;width:1024px;height:213px;background:#fff"></div>
<div class="b" style="left:0px;top:616px;width:1024px;height:20px;background:#efefef"></div>
<div class="b" style="left:0px;top:616px;width:1px;height:20px;background:#fff"></div>
<div class="b" style="left:0px;top:636px;width:1024px;height:1px;background:#a8a8a8"></div>
<div class="b" style="left:0px;top:637px;width:1024px;height:14px;background:#f0f0f0"></div>
<div class="b" style="left:0px;top:651px;width:1024px;height:7px;background:#ececec"></div>
<div class="b" style="left:35px;top:651px;width:426px;height:7px;background:#fafafa;border:1px solid #a9a9a9"></div>
<div class="b" style="left:47px;top:654px;width:403px;height:1px;background:repeating-linear-gradient(90deg,#3b8ee0 0 1px,transparent 1px 3px)"></div>
<svg style="left:39px;top:652px" width="7" height="5" viewBox="0 0 7 5"><path d="M0.5 0.5L3.5 3.5L6.5 0.5" stroke="#111" stroke-width="1.4" fill="none"/></svg>
<svg style="left:451px;top:652px" width="7" height="5" viewBox="0 0 7 5"><path d="M0.5 0.5L3.5 3.5L6.5 0.5" stroke="#111" stroke-width="1.4" fill="none"/></svg>
<div class="b" style="left:0px;top:658px;width:1024px;height:16px;background:#fff"></div>
<div class="b" style="left:0px;top:674px;width:1024px;height:2px;background:#6e6e6e"></div>
<div class="b" style="left:0px;top:676px;width:1024px;height:24px;background:#f3f3f3"></div>
<div class="b" style="left:508px;top:677px;width:62px;height:23px;background:#808080"></div>
<div class="t" style="left:510px;top:677.0px;font-size:10px;line-height:12px;color:#f4f4f4;transform:scaleX(0.88);transform-origin:0 50%;">Nr LP</div>
<div class="t" style="left:510px;top:690.0px;font-size:10px;line-height:12px;color:#f4f4f4;transform:scaleX(0.88);transform-origin:0 50%;">Nr DK</div>
<div class="b" style="left:645px;top:677px;width:60px;height:23px;background:#808080"></div>
<div class="t" style="left:647px;top:676.5px;font-size:10px;line-height:12px;color:#f4f4f4;transform:scaleX(0.88);transform-origin:0 50%;">Instrukcje dodatkowe</div>
<div class="b" style="left:704px;top:698px;width:320px;height:2px;background:#8e8e8e"></div>
<div class="b" style="left:704px;top:0px;width:320px;height:698px;background:#f9f9f9;border:1px solid #a0a0a0"></div>
<div class="t" style="left:733px;top:2.0px;font-size:9.6px;line-height:17px;color:#000;transform:scaleX(0.955);transform-origin:0 50%;">Nowe zlecenie transportu</div>
<div class="t" style="left:733px;top:19.0px;font-size:9.6px;line-height:17px;color:#000;transform:scaleX(0.955);transform-origin:0 50%;">Nowe zlecenie transportu na podstawie bieżącego ...</div>
<div class="t" style="left:733px;top:36.0px;font-size:9.6px;line-height:17px;color:#000;transform:scaleX(0.955);transform-origin:0 50%;">Nowe zlecenie spedycji</div>
<div class="t" style="left:733px;top:53.0px;font-size:9.6px;line-height:17px;color:#000;transform:scaleX(0.955);transform-origin:0 50%;">Nowe zlecenie spedycji na podstawie bieżącego ...</div>
<div class="t" style="left:733px;top:70.0px;font-size:9.6px;line-height:17px;color:#000;transform:scaleX(0.955);transform-origin:0 50%;">Nowe zlecenia inne</div>
<div class="t" style="left:733px;top:87.0px;font-size:9.6px;line-height:17px;color:#000;transform:scaleX(0.955);transform-origin:0 50%;">Nowe zlecenie inne na podstawie bieżącego ...</div>
<div class="b" style="left:711px;top:107px;width:306px;height:1px;background:#e3e3e3"></div>
<div class="t" style="left:733px;top:111.0px;font-size:9.6px;line-height:17px;color:#000;transform:scaleX(0.955);transform-origin:0 50%;">Skopiuj zlecenie</div>
<div class="t" style="left:733px;top:128.0px;font-size:9.6px;line-height:17px;color:#000;transform:scaleX(0.955);transform-origin:0 50%;">Twórz cyklicznie nowy dokument na podstawie bieżącego ...</div>
<div class="t" style="left:733px;top:145.0px;font-size:9.6px;line-height:17px;color:#000;transform:scaleX(0.955);transform-origin:0 50%;">Podziel zlecenie</div>
<div class="b" style="left:711px;top:165px;width:306px;height:1px;background:#e3e3e3"></div>
<div class="t" style="left:733px;top:169.0px;font-size:9.6px;line-height:17px;color:#000;transform:scaleX(0.955);transform-origin:0 50%;">Nowy drogowy list przewozowy</div>
<div class="t" style="left:733px;top:186.0px;font-size:9.6px;line-height:17px;color:#000;transform:scaleX(0.955);transform-origin:0 50%;">Nowy morski list przewozowy HBL</div>
<div class="t" style="left:733px;top:203.0px;font-size:9.6px;line-height:17px;color:#000;transform:scaleX(0.955);transform-origin:0 50%;">Nowy morski list przewozowy MBL</div>
<div class="t" style="left:733px;top:220.0px;font-size:9.6px;line-height:17px;color:#000;transform:scaleX(0.955);transform-origin:0 50%;">Nowy morski list przewozowy BL</div>
<div class="t" style="left:733px;top:237.0px;font-size:9.6px;line-height:17px;color:#000;transform:scaleX(0.955);transform-origin:0 50%;">Nowy lotniczy list przewozowy HAWB</div>
<div class="t" style="left:733px;top:254.0px;font-size:9.6px;line-height:17px;color:#000;transform:scaleX(0.955);transform-origin:0 50%;">Nowy lotniczy list przewozowy MAWB</div>
<div class="t" style="left:733px;top:271.0px;font-size:9.6px;line-height:17px;color:#000;transform:scaleX(0.955);transform-origin:0 50%;">Nowy kolejowy list przewozowy CIM</div>
<div class="t" style="left:733px;top:288.0px;font-size:9.6px;line-height:17px;color:#000;transform:scaleX(0.955);transform-origin:0 50%;">Nowy kolejowy list przewozowy SMGS</div>
<div class="t" style="left:733px;top:305.0px;font-size:9.6px;line-height:17px;color:#000;transform:scaleX(0.955);transform-origin:0 50%;">Nowe zlecenie wyjazdu/załadunku</div>
<div class="t" style="left:733px;top:322.0px;font-size:9.6px;line-height:17px;color:#000;transform:scaleX(0.955);transform-origin:0 50%;">Nowy załącznik dla zleceniodawcy/płatnika</div>
<div class="t" style="left:733px;top:339.0px;font-size:9.6px;line-height:17px;color:#000;transform:scaleX(0.955);transform-origin:0 50%;">Nowy załącznik dla przewoźnika</div>
<div class="t" style="left:733px;top:356.0px;font-size:9.6px;line-height:17px;color:#000;transform:scaleX(0.955);transform-origin:0 50%;">Nowy odcinek trasy pojazdu</div>
<div class="t" style="left:733px;top:373.0px;font-size:9.6px;line-height:17px;color:#000;transform:scaleX(0.955);transform-origin:0 50%;">Nowa delegacja</div>
<div class="t" style="left:733px;top:390.0px;font-size:9.6px;line-height:17px;color:#000;transform:scaleX(0.955);transform-origin:0 50%;">Nowa reklamacja</div>
<div class="t" style="left:733px;top:407.0px;font-size:9.6px;line-height:17px;color:#000;transform:scaleX(0.955);transform-origin:0 50%;">Nowa karta przekazania odpadów</div>
<div class="t" style="left:733px;top:424.0px;font-size:9.6px;line-height:17px;color:#000;transform:scaleX(0.955);transform-origin:0 50%;">Nowa faktura pro forma</div>
<div class="b" style="left:706px;top:441px;width:314px;height:17px;background:#ebebeb;box-shadow:inset 0 2px 2px -1px rgba(0,0,0,.18)"></div>
<div class="t" style="left:733px;top:441.0px;font-size:9.6px;line-height:17px;color:#000;transform:scaleX(0.955);transform-origin:0 50%;">Nowa faktura</div>
<svg style="left:1007px;top:445.5px" width="6" height="9" viewBox="0 0 6 9"><path d="M1 1L4 4L1 7" stroke="#333" stroke-width="1.1" fill="none"/></svg>
<div class="t" style="left:733px;top:458.0px;font-size:9.6px;line-height:17px;color:#000;transform:scaleX(0.955);transform-origin:0 50%;">Nowa nota obciążeniowa</div>
<svg style="left:1007px;top:462.5px" width="6" height="9" viewBox="0 0 6 9"><path d="M1 1L4 4L1 7" stroke="#333" stroke-width="1.1" fill="none"/></svg>
<div class="t" style="left:733px;top:475.0px;font-size:9.6px;line-height:17px;color:#000;transform:scaleX(0.955);transform-origin:0 50%;">Nowa nota kredytowa</div>
<div class="t" style="left:733px;top:492.0px;font-size:9.6px;line-height:17px;color:#000;transform:scaleX(0.955);transform-origin:0 50%;">Nowy dokument kasowy KP</div>
<div class="t" style="left:733px;top:509.0px;font-size:9.6px;line-height:17px;color:#000;transform:scaleX(0.955);transform-origin:0 50%;">Nowy dokument kosztowy</div>
<svg style="left:1007px;top:513.5px" width="6" height="9" viewBox="0 0 6 9"><path d="M1 1L4 4L1 7" stroke="#333" stroke-width="1.1" fill="none"/></svg>
<div class="t" style="left:733px;top:526.0px;font-size:9.6px;line-height:17px;color:#000;transform:scaleX(0.955);transform-origin:0 50%;">Nowe upoważnienie</div>
<svg style="left:1007px;top:530.5px" width="6" height="9" viewBox="0 0 6 9"><path d="M1 1L4 4L1 7" stroke="#333" stroke-width="1.1" fill="none"/></svg>
<div class="t" style="left:733px;top:543.0px;font-size:9.6px;line-height:17px;color:#000;transform:scaleX(0.955);transform-origin:0 50%;">Nowa awizacja dostawy</div>
<svg style="left:1007px;top:547.5px" width="6" height="9" viewBox="0 0 6 9"><path d="M1 1L4 4L1 7" stroke="#333" stroke-width="1.1" fill="none"/></svg>
<div class="t" style="left:733px;top:560.0px;font-size:9.6px;line-height:17px;color:#000;transform:scaleX(0.955);transform-origin:0 50%;">Nowa awizacja pojazdu</div>
<div class="t" style="left:733px;top:577.0px;font-size:9.6px;line-height:17px;color:#000;transform:scaleX(0.955);transform-origin:0 50%;">Nowa ocena</div>
<svg style="left:1007px;top:581.5px" width="6" height="9" viewBox="0 0 6 9"><path d="M1 1L4 4L1 7" stroke="#333" stroke-width="1.1" fill="none"/></svg>
<div class="t" style="left:733px;top:594.0px;font-size:9.6px;line-height:17px;color:#000;transform:scaleX(0.955);transform-origin:0 50%;">Nowy dokument korespondencji - poczta przychodząca</div>
<div class="t" style="left:733px;top:611.0px;font-size:9.6px;line-height:17px;color:#000;transform:scaleX(0.955);transform-origin:0 50%;">Nowy ważny termin ...</div>
<svg style="left:1007px;top:615.5px" width="6" height="9" viewBox="0 0 6 9"><path d="M1 1L4 4L1 7" stroke="#333" stroke-width="1.1" fill="none"/></svg>
<div class="t" style="left:733px;top:628.0px;font-size:9.6px;line-height:17px;color:#000;transform:scaleX(0.955);transform-origin:0 50%;">Nowa notatka ...</div>
<svg style="left:1007px;top:632.5px" width="6" height="9" viewBox="0 0 6 9"><path d="M1 1L4 4L1 7" stroke="#333" stroke-width="1.1" fill="none"/></svg>
<div class="t" style="left:733px;top:645.0px;font-size:9.6px;line-height:17px;color:#000;transform:scaleX(0.955);transform-origin:0 50%;">Nowy plik powiązany z dokumentem</div>
<div class="t" style="left:733px;top:662.0px;font-size:9.6px;line-height:17px;color:#000;transform:scaleX(0.955);transform-origin:0 50%;">Nalicz premie dla pracowników</div>
<div class="t" style="left:733px;top:679.0px;font-size:9.6px;line-height:17px;color:#000;transform:scaleX(0.955);transform-origin:0 50%;">Nalicz korekty premii dla pracowników</div>
<div class="b" style="left:705px;top:439.5px;width:315px;height:20.5px;border:2px solid #f01414;box-shadow:1px 1px 2px rgba(0,0,0,.25)"></div>
<div class="b" style="left:530px;top:438px;width:177px;height:56px;background:#f9f9f9;border:1px solid #a0a0a0;box-shadow:2px 2px 3px rgba(0,0,0,.35)"></div>
<div class="b" style="left:532px;top:440px;width:172px;height:17px;background:#f0f0f0;box-shadow:inset 0 2px 2px -1px rgba(0,0,0,.15)"></div>
<div class="t" style="left:560px;top:441.0px;font-size:9.6px;line-height:17px;color:#000;transform:scaleX(0.955);transform-origin:0 50%;">Nowa faktura</div>
<div class="t" style="left:560px;top:458.0px;font-size:9.6px;line-height:17px;color:#000;transform:scaleX(0.955);transform-origin:0 50%;">Nowa faktura zaliczkowa</div>
<div class="t" style="left:560px;top:475.0px;font-size:9.6px;line-height:17px;color:#000;transform:scaleX(0.955);transform-origin:0 50%;">Paragon</div>
<div class="b" style="left:531px;top:437px;width:175px;height:20.5px;border:2px solid #f01414"></div>
</body></html>
